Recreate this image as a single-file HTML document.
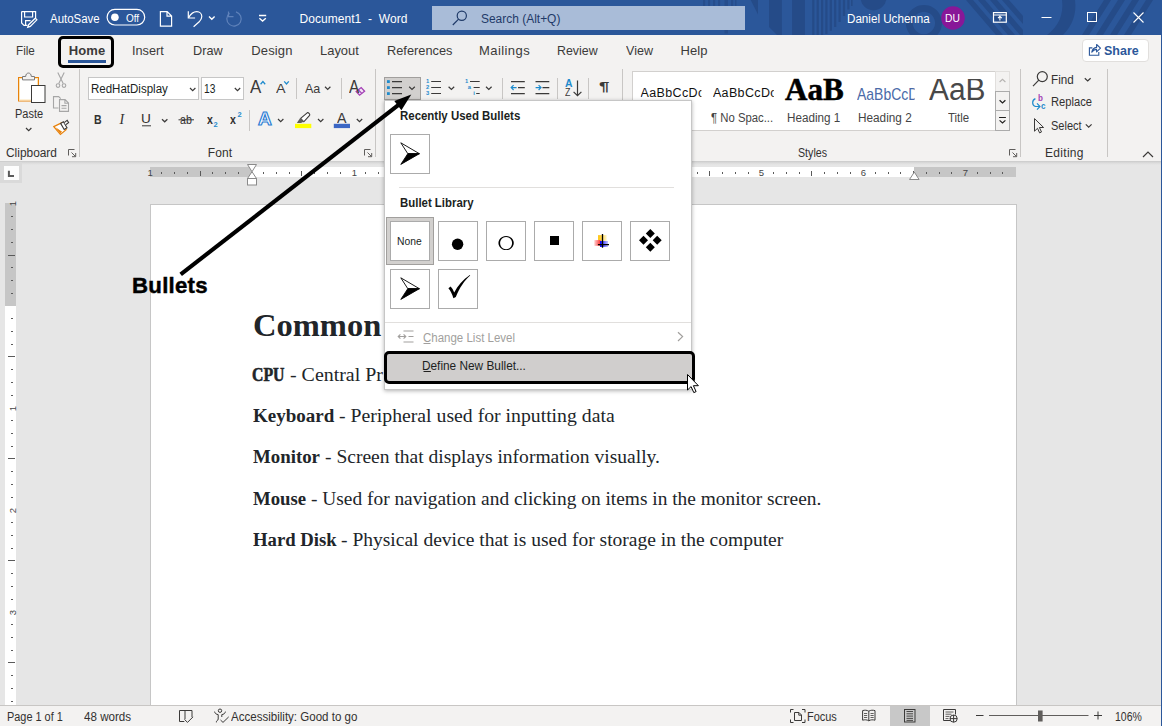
<!DOCTYPE html>
<html lang="en"><head><meta charset="utf-8"><title>Document1 - Word</title>
<style>
html,body{margin:0;padding:0}
body{width:1162px;height:726px;position:relative;overflow:hidden;background:#e6e6e6;font-family:"Liberation Sans",sans-serif}
.a{position:absolute}
.t{position:absolute;white-space:pre;z-index:4}
#title{left:0;top:0;width:1162px;height:35px;background:#2b579a}
#tabs{left:0;top:35px;width:1162px;height:33px;background:#f3f2f1}
#ribbon{left:0;top:68px;width:1162px;height:93px;background:#f3f2f1}
#rshadow{left:0;top:161px;width:1162px;height:4px;background:linear-gradient(#c9c9c9,#dcdcdc 50%,#e6e6e6)}
#page{left:150px;top:204px;width:865px;height:501px;background:#fff;border:1px solid #c6c6c6;border-bottom:none}
#status{left:0;top:705px;width:1162px;height:21px;background:#f3f2f1;border-top:1px solid #c8c6c4;box-sizing:border-box}
.vs{position:absolute;width:1px;background:#c8c6c4}
.box{position:absolute;background:#fff;border:1px solid #c6c6c6;box-sizing:border-box}
#dd{left:384px;top:100px;width:308px;height:290px;background:#fff;border:1px solid #c6c6c6;box-sizing:border-box;box-shadow:0 1px 4px rgba(0,0,0,.3);z-index:5}
.bb{position:absolute;width:40px;height:40px;box-sizing:border-box;border:1px solid #ababab;background:#fff;z-index:6}
svg{position:absolute;left:0;top:0;overflow:visible}

</style></head>
<body>
<div class="a" id="title"></div>
<div class="a" id="tabs"></div>
<div class="a" id="ribbon"></div>
<div class="a" id="rshadow"></div>
<div class="a" id="page"></div>
<div class="a" id="status"></div>
<!-- search box -->
<div class="a" style="left:432px;top:6px;width:313px;height:24px;background:#a9bcd8"></div>
<!-- share -->
<div class="a" style="left:1081.5px;top:38.5px;width:67px;height:23px;background:#fff;border:1px solid #e1dfdd;border-radius:4px;box-sizing:border-box"></div>
<!-- home underline -->
<div class="a" style="left:68px;top:60px;width:38px;height:3px;background:#2b579a"></div>
<!-- ribbon separators -->
<div class="vs" style="left:79px;top:69px;height:88px"></div>
<div class="vs" style="left:375px;top:69px;height:88px"></div>
<div class="vs" style="left:622px;top:69px;height:88px"></div>
<div class="vs" style="left:1020px;top:69px;height:88px"></div>
<div class="vs" style="left:1107px;top:69px;height:88px"></div>
<div class="vs" style="left:296px;top:78px;height:21px"></div>
<div class="vs" style="left:341px;top:78px;height:21px"></div>
<div class="vs" style="left:249px;top:110px;height:21px"></div>
<div class="vs" style="left:502px;top:78px;height:21px"></div>
<div class="vs" style="left:557px;top:78px;height:21px"></div>
<div class="vs" style="left:588px;top:78px;height:21px"></div>
<!-- font boxes -->
<div class="box" style="left:88px;top:77px;width:111px;height:23px"></div>
<div class="box" style="left:201px;top:77px;width:43px;height:23px"></div>
<!-- bullets button pressed -->
<div class="a" style="left:384px;top:77px;width:37px;height:23px;background:#d2d0ce;border:1px solid #a19f9d;box-sizing:border-box"></div>
<!-- styles gallery -->
<div class="box" style="left:632px;top:71px;width:364px;height:60px;border-color:#d2d0ce"></div>
<!-- rulers -->
<div class="a" style="left:150px;top:167px;width:866px;height:10px;background:#fff"></div>
<div class="a" style="left:150px;top:167px;width:102px;height:10px;background:#c6c6c6"></div>
<div class="a" style="left:914px;top:167px;width:102px;height:10px;background:#c6c6c6"></div>
<div class="a" style="left:5px;top:203px;width:11px;height:502px;background:#fff"></div>
<div class="a" style="left:5px;top:203px;width:11px;height:103px;background:#c6c6c6"></div>
<div class="a" style="left:0;top:162px;width:22px;height:21px;background:#dadada"></div>
<div class="a" style="left:3.5px;top:165.5px;width:15px;height:14.5px;background:#fdfdfd"></div>
<!-- status selected view -->
<div class="a" style="left:890px;top:706px;width:40px;height:20px;background:#c8c8c8"></div>
<svg width="1162" height="726" viewBox="0 0 1162 726" style="z-index:3" fill="none" stroke-linecap="butt">
<!-- title pattern -->
<g fill="#254b88" stroke="none">
  <clipPath id="tc"><rect x="700" y="0" width="462" height="35"/></clipPath>
  <g clip-path="url(#tc)">
    <path d="M703 0h2.200v6h-2.200zM708 0h2.200v6h-2.200zM713 0h2.200v6h-2.200zM718 0h2.200v6h-2.200zM724.500 0h3.500v6h-3.500zM731 0h2.200v6h-2.200zM735 0h1.500v6h-1.500zM724.500 30h3.500v3.500h-3.500z" opacity=".8"/>
    <path d="M750.700 0h7.300v14.600z"/>
    <path d="M769 0h12.900v35h-4.900l-8-8z"/>
    <rect x="792.100" y="0" width="12.800" height="35"/>
    <path d="M812.200 0h2.200v35h-2.200zM816.600 0h2.200v35h-2.200zM821 0h2.200v35h-2.200zM825.300 0h2.200v34h-2.200zM829.700 0h2.200v30.700h-2.200zM834.100 0h2.200v27h-2.200zM838.500 0h2.200v22h-2.200zM842.900 0h2.200v16h-2.200zM847.300 0h2.200v9.500h-2.200zM851 0h1.600v5.900h-1.600z"/>
    <circle cx="873.500" cy="-2.500" r="12.900"/>
    <path d="M923.900 5a18 18 0 1 0 .01 0zM923.900 11.800a11.200 11.200 0 1 1 -.01 0z" fill-rule="evenodd"/>
    <path d="M966 0h7l30 35h-7zM978 0h7l30 35h-7zM990 0h7l26 30v5h-3zM1002 0h7l14 16v8z"/>
    <path d="M1062 0h13c2 14-3 26-12 35h-16c11-8 17-20 15-35z"/>
    <path d="M1104 0h7l-22 35h-7zM1118 0h7l-22 35h-7zM1132 0h7l-22 35h-7zM1146 0h7l-22 35h-7z"/>
  </g>
</g>
<!-- ===== title bar ===== -->
<g stroke="#fff" stroke-width="1.2" fill="none">
  <!-- save -->
  <path d="M21.6 11.6h14v7M21.6 11.6v11.4l2.4 2.4h3.5M24.6 11.6v5.4h8v-5.4M25.6 25.4v-4.8h5"/>
  <path d="M35.3 18.2l1.6 1.6-6.6 6.6-2.6.9.9-2.6z"/>
  <!-- toggle -->
  <rect x="107.1" y="9.4" width="37.6" height="15.6" rx="7.8"/>
  <!-- new doc -->
  <path d="M160.4 11.6h6.8l4.4 4.4v10.2h-11.2zM167 11.8v4.4h4.4"/>
  <!-- undo -->
  <path d="M188.3 11.2v6.8h6.8" />
  <path d="M188.6 17.6c2-3.6 5-6 8.2-6 3 0 5 2.300 5 5 0 2-1 3.600-2.600 5.200l-5.600 4.900"/>
  <path d="M209 16.600l2.800 2.600 2.800-2.600" stroke-width="1.4"/>
  <!-- customize -->
  <path d="M259 15.500h7.200M259.400 18.200l3.200 2.800 3.200-2.800" stroke-width="1.4"/>
  <!-- ribbon display -->
  <rect x="993.500" y="12.600" width="12.800" height="9.600" />
  <path d="M993.500 15h12.800M999.900 20.600v-4M998 18.200l1.900-1.900 1.900 1.900" stroke-width="1.100"/>
  <!-- min/max/close -->
  <path d="M1041.500 17.500h10" stroke-width="1"/>
  <rect x="1087.500" y="12.500" width="9" height="9" stroke-width="1"/>
  <path d="M1133.500 12.500l10 10M1143.500 12.500l-10 10" stroke-width="1.100"/>
</g>
<circle cx="114.900" cy="17.200" r="3.800" fill="#fff"/>
<!-- redo dim -->
<g stroke="#5f82ba" stroke-width="1.200" fill="none">
  <path d="M229.500 13.200a7.200 7.200 0 1 0 6.500-1.300"/>
  <path d="M228.500 11.600v5h5"/>
</g>
<!-- search icon -->
<g stroke="#1f3a68" stroke-width="1.200" fill="none">
  <circle cx="461.800" cy="15.800" r="4.600"/>
  <path d="M458.600 19.200l-5.800 5.800"/>
</g>
<!-- DU -->
<circle cx="953" cy="18" r="11.800" fill="#881798" stroke="none"/>

<!-- ===== clipboard group ===== -->
<rect x="18.500" y="77.500" width="20" height="23.500" fill="#fff" stroke="#e8820c" stroke-width="1"/>
<rect x="19.500" y="78.500" width="18" height="21.500" fill="none" stroke="#fbe3b5" stroke-width="1"/>
<path d="M22.500 79.900v-3.400h3.200c0-4.600 5.600-4.600 5.600 0h3.200v3.400z" fill="#f3f2f1" stroke="#7a7a7a" stroke-width="1"/>
<rect x="31.500" y="85.500" width="13.500" height="17" fill="#fff" stroke="#3b3a39" stroke-width="1"/>
<path d="M26 128l2.700 2.600 2.700-2.600" stroke="#3b3a39" stroke-width="1.200"/>
<!-- scissors -->
<g stroke="#a6a6a6" stroke-width="1.100" fill="none">
  <path d="M57.800 72.600l5.400 11M64.200 72.600l-5.400 11"/>
  <circle cx="58" cy="85.600" r="1.800"/><circle cx="64" cy="85.600" r="1.800"/>
</g>
<!-- copy -->
<g stroke="#a6a6a6" stroke-width="1.100" fill="none">
  <path d="M58.500 108h-5v-11.400h5.200l2 2"/>
  <path d="M59.500 99.600h5.600l3.400 3.400v8.400h-9zM64.900 99.800v3.400h3.400"/>
  <path d="M61.500 105.600h5M61.500 108.200h5"/>
</g>
<!-- format painter -->
<g>
  <path d="M53.800 126.600l8.200-4 4.200 7-5.800 4.800z" fill="#fff" stroke="#e8820c" stroke-width="1.200"/>
  <path d="M55.500 127.200l4.600 6.200 2-1.600z" fill="#e8820c" stroke="none"/>
  <path d="M60.600 123.400l2.800-1.600 3.600 6-2.800 1.700z" fill="#fff" stroke="#3b3a39" stroke-width="1.100"/>
  <path d="M64.200 122.600l3-2.200 1.400 2.200-3 2.200" fill="#fff" stroke="#3b3a39" stroke-width="1.100"/>
</g>
<!-- launchers -->
<g stroke="#605e5c" stroke-width="1" fill="none">
  <path id="lch" d="M68.500 155.500v-6h6M71.500 152.500l4 4M75.700 153v3.700h-3.700"/>
  <use href="#lch" x="296" y="0"/>
  <use href="#lch" x="941" y="0"/>
</g>

<!-- ===== font group ===== -->
<g stroke="#3b3a39" stroke-width="1.200" fill="none">
  <path d="M190 88l2.700 2.600 2.700-2.600"/>
  <path d="M234.800 88l2.700 2.600 2.700-2.600"/>
  <path d="M162 119.200l2.700 2.600 2.700-2.600"/>
  <path d="M325 86.800l2.700 2.600 2.700-2.600"/>
  <path d="M278 119l2.700 2.600 2.700-2.600"/>
  <path d="M318 119l2.700 2.600 2.700-2.600"/>
  <path d="M356.800 119l2.700 2.600 2.700-2.600"/>
</g>
<path d="M142 125.800h9" stroke="#3b3a39" stroke-width="1"/>
<path d="M178.500 119.800h15.500" stroke="#3b3a39" stroke-width="1"/>
<!-- grow/shrink carets -->
<path d="M260.600 84.200l2.300-2.600 2.300 2.600" stroke="#1e8bcd" stroke-width="1.300"/>
<path d="M284.200 81.400l2.300 2.600 2.300-2.600" stroke="#1e8bcd" stroke-width="1.300"/>
<!-- clear formatting eraser -->
<path d="M356.200 91.600l5-4 3.400 3.600-5 4z" fill="#f3e6f5" stroke="#a33fb5" stroke-width="1.300"/>
<path d="M358.400 89.800l3.400 3.600" stroke="#a33fb5" stroke-width="1.200"/>
<!-- text effects A drawn with real text in html; highlight bar -->
<rect x="295" y="123.800" width="16.300" height="4.300" fill="#ffff00"/>
<path d="M300.600 118.400l6.600-5.600c1-.8 3.200 1.400 2.400 2.600l-5.800 6.400z" fill="#fff" stroke="#3b3a39" stroke-width="1.100"/>
<path d="M296.800 123l3.400-5 3.800 3.400-3 1.600z" fill="#605e5c"/>
<rect x="333.800" y="123.800" width="16.200" height="4.300" fill="#3b66c4"/>

<!-- ===== paragraph group ===== -->
<!-- bullets icon -->
<g fill="#1e8bcd">
  <rect x="387" y="80.200" width="2.800" height="2.800"/><rect x="387" y="86.200" width="2.800" height="2.800"/><rect x="387" y="92.200" width="2.800" height="2.800"/>
</g>
<g stroke="#3b3a39" stroke-width="1.100">
  <path d="M392 81.600h10M392 87.600h10M392 93.600h10"/>
  <path d="M409.200 86.800l2.800 2.700 2.800-2.700" stroke-width="1.200"/>
</g>
<!-- numbering -->
<g stroke="#3b3a39" stroke-width="1.100">
  <path d="M431.200 81.500h9.800M431.200 87.500h9.800M431.200 93.500h9.800"/>
  <path d="M448.600 86.800l2.800 2.700 2.800-2.700" stroke-width="1.200"/>
  <path d="M470 81.500h9.700M473.600 87.500h6.100M476.200 93.500h3.500"/>
  <path d="M486 86.800l2.800 2.700 2.800-2.700" stroke-width="1.200"/>
</g>
<!-- indent icons -->
<g stroke="#3b3a39" stroke-width="1.100">
  <path d="M511 81.600h13.800M518 87.600h6.800M511 93.600h13.800"/>
  <path d="M535.500 81.600h13.800M542.500 87.600h6.800M535.500 93.600h13.800"/>
</g>
<g stroke="#1e8bcd" stroke-width="1.200">
  <path d="M511.200 87.600h5.400M513.600 85.200l-2.400 2.400 2.400 2.400"/>
  <path d="M535.600 87.600h5.400M538.600 85.200l2.400 2.400-2.400 2.400"/>
</g>
<!-- sort arrow -->
<path d="M577.500 80.400v15M573.600 91.800l3.900 3.900 3.900-3.900" stroke="#3b3a39" stroke-width="1.200"/>

<!-- ===== styles gallery scroll ===== -->
<g fill="#f3f2f1" stroke-width="1">
  <rect x="995.500" y="71.500" width="14" height="20" stroke="#e1dfdd"/>
  <rect x="995.500" y="91.500" width="14" height="19" stroke="#ababab"/>
  <rect x="995.500" y="110.500" width="14" height="20" stroke="#ababab"/>
</g>
<path d="M999.600 82l2.900-2.700 2.900 2.700" stroke="#b5b3b1" stroke-width="1.100"/>
<path d="M999.600 100.300l2.900 2.700 2.900-2.700" stroke="#201f1e" stroke-width="1.200"/>
<path d="M999.100 117.500h6.800M999.600 120.400l2.900 2.600 2.900-2.600" stroke="#201f1e" stroke-width="1.200"/>

<!-- ===== editing ===== -->
<g stroke="#3b3a39" stroke-width="1.200" fill="none">
  <circle cx="1042.300" cy="76.600" r="5"/>
  <path d="M1038.800 80.200l-5.800 6"/>
  <path d="M1084.800 78.200l2.900 2.700 2.900-2.700"/>
  <path d="M1085.800 124.400l2.900 2.700 2.900-2.700"/>
  <path d="M1034.500 118.600v12.600l3-2.900 2.100 4.600 1.900-.9-2.100-4.500h4.200z" stroke-width="1" fill="#f3f2f1"/>
</g>
<path d="M1143 157l5-5 5 5" stroke="#3b3a39" stroke-width="1.200"/>
<!-- replace icon -->
<g stroke="#1e8bcd" stroke-width="1.200" fill="none">
  <path d="M1035.400 98.600c-3.600 1.600-3.800 6.600.2 7.900h4M1037 103.400l3 3.100-3 3.100"/>
</g>

<!-- share icon -->
<g stroke="#2b579a" stroke-width="1.100" fill="none">
  <path d="M1092.400 47.900h-3v7.400h9.400v-3.300"/>
  <path d="M1091.800 52.200c.6-3 2.400-4.600 4.800-4.800v-2.900l3.900 3.700-3.900 3.700v-2.500c-2 0-3.600.9-4.800 2.800z" stroke-linejoin="round"/>
</g>

<!-- ===== ruler marks ===== -->
<path d="M161.5 172v2M174.5 172v2M187.5 172v2M200.5 171v5M212.5 172v2M225.5 172v2M238.5 172v2M263.5 172v2M276.5 172v2M289.5 172v2M301.5 171v5M314.5 172v2M327.5 172v2M340.5 172v2M365.5 172v2M378.5 172v2M391.5 172v2M403.5 171v5M416.5 172v2M429.5 172v2M442.5 172v2M467.5 172v2M480.5 172v2M493.5 172v2M505.5 171v5M518.5 172v2M531.5 172v2M544.5 172v2M569.5 172v2M582.5 172v2M595.5 172v2M607.5 171v5M620.5 172v2M633.5 172v2M646.5 172v2M671.5 172v2M684.5 172v2M697.5 172v2M709.5 171v5M722.5 172v2M735.5 172v2M748.5 172v2M773.5 172v2M786.5 172v2M799.5 172v2M811.5 171v5M824.5 172v2M837.5 172v2M850.5 172v2M875.5 172v2M888.5 172v2M900.5 172v2M913.5 171v5M926.5 172v2M939.5 172v2M951.5 172v2M977.5 172v2M990.5 172v2M1002.5 172v2M11 216.5h2M11 229.5h2M11 242.5h2M8 255.5h7M11 267.5h2M11 280.5h2M11 293.5h2M11 318.5h2M11 331.5h2M11 344.5h2M8 356.5h7M11 369.5h2M11 382.5h2M11 395.5h2M11 420.5h2M11 433.5h2M11 446.5h2M8 458.5h7M11 471.5h2M11 484.5h2M11 497.5h2M11 522.5h2M11 535.5h2M11 548.5h2M8 560.5h7M11 573.5h2M11 586.5h2M11 599.5h2M11 624.5h2M11 637.5h2M11 650.5h2M8 662.5h7M11 675.5h2M11 688.5h2M11 701.5h2" stroke="#5a5a5a" stroke-width="1"/>

<!-- ===== status bar ===== -->
<g stroke="#3b3a39" stroke-width="1" fill="none">
  <!-- book -->
  <path d="M185 710.500h-5.500v11h4.800M185 710.500v8.600M185 710.500h7v6.600M184.400 719.300l3.100 3.100 5.500-5.500"/>
  <!-- accessibility -->
  <circle cx="220" cy="710.700" r="1.700"/>
  <path d="M214.600 711.600c.3 2 1.800 2.800 3.600 3v4.400c0 2-2.400 1.400-1.800 3.400M225.400 711.600c-.3 2-1.800 2.800-3.600 3v2.400"/>
  <path d="M220.500 720l2.500 2.400 5.700-5.500"/>
  <!-- focus -->
  <path d="M790.500 712.500v-3h3M802 709.500h3v3M805 719.500v3h-3M793.500 722.500h-3v-3"/>
  <path d="M794.500 712.500h4.500l2.500 2.500v5.500h-7zM798.800 712.700v2.500h2.500"/>
  <!-- read mode -->
  <path d="M868.800 711.200c-2-1.200-4-1.200-6.200-.6v9.600c2.200-.6 4.200-.6 6.200.6 2-1.200 4-1.200 6.200-.6v-9.600c-2.200-.6-4.200-.6-6.200.6zM868.800 711.200v9.600"/>
  <path d="M864 713.500h3.200M864 715.500h3.200M864 717.500h3.200M870.500 713.500h3.200M870.500 715.500h3.200M870.500 717.500h3.200" stroke-width=".8"/>
  <!-- web layout -->
  <path d="M950 720.500h-6.500v-11h12v5"/>
  <path d="M945.500 712h8M945.500 714.200h6M945.500 716.400h4M945.500 718.600h3" stroke-width=".8"/>
  <circle cx="953.600" cy="718.600" r="3.600"/><path d="M950 718.600h7.200M953.600 715v7.200"/>
  <!-- zoom -->
  <path d="M976 715.500h7.500M1094 715.500h8M1098 711.500v8"/>
  <path d="M989 715.500h99.500" stroke="#605e5c"/>
</g>
<rect x="1038" y="710.500" width="4.600" height="11" fill="#605e5c"/>

<!-- print layout icon -->
<g stroke="#3b3a39" stroke-width="1" fill="none">
  <rect x="904.500" y="709.500" width="10.500" height="12.500" fill="none"/>
  <path d="M906.500 711.500h6.500M906.500 713.800h6.500M906.500 716.100h6.500M906.500 718.400h6.500M906.500 720.400h6.500" stroke-width=".9"/>
</g>
<path d="M8.900 170.700v5.300h5.100" stroke="#5a5a5a" stroke-width="2" fill="none"/>
<!-- indent markers -->
<g stroke="#8a8a8a" stroke-width="1" fill="#fff">
  <path d="M247.500 164.500h9l-4.500 7.200z"/>
  <path d="M247.500 178.500l4.500-6.800 4.500 6.800z"/>
  <rect x="247.500" y="178.500" width="9" height="6.500"/>
  <path d="M909.500 179.500l4.800-7.400 4.800 7.400z"/>
</g>
</svg>

<span class="t" id="t0" style="left:50.30px;top:13.44px;font:normal 400 12px/1 'Liberation Sans', sans-serif;color:#fff;letter-spacing:0.000px;transform:scaleX(0.9558);transform-origin:0 0;">AutoSave</span>
<span class="t" id="t1" style="left:125.90px;top:14.14px;font:normal 400 10px/1 'Liberation Sans', sans-serif;color:#fff;letter-spacing:0.000px;">Off</span>
<span class="t" id="t2" style="left:299.50px;top:13.44px;font:normal 400 12px/1 'Liberation Sans', sans-serif;color:#fff;letter-spacing:0.047px;">Document1  -  Word</span>
<span class="t" id="t3" style="left:481.00px;top:13.44px;font:normal 400 12px/1 'Liberation Sans', sans-serif;color:#1f3a68;letter-spacing:0.000px;transform:scaleX(0.9962);transform-origin:0 0;">Search (Alt+Q)</span>
<span class="t" id="t4" style="left:846.60px;top:13.44px;font:normal 400 12px/1 'Liberation Sans', sans-serif;color:#fff;letter-spacing:0.000px;transform:scaleX(0.9694);transform-origin:0 0;">Daniel Uchenna</span>
<span class="t" id="t5" style="left:944.70px;top:12.69px;font:normal 400 11px/1 'Liberation Sans', sans-serif;color:#fff;letter-spacing:0.000px;transform:scaleX(0.9333);transform-origin:0 0;">DU</span>
<span class="t" id="t6" style="left:16.20px;top:44.00px;font:normal 400 13px/1 'Liberation Sans', sans-serif;color:#3b3a39;letter-spacing:0.000px;transform:scaleX(0.9000);transform-origin:0 0;">File</span>
<span class="t" id="t7" style="left:68.80px;top:44.00px;font:normal 700 13px/1 'Liberation Sans', sans-serif;color:#3b3a39;letter-spacing:0.067px;">Home</span>
<span class="t" id="t8" style="left:132.20px;top:44.00px;font:normal 400 13px/1 'Liberation Sans', sans-serif;color:#3b3a39;letter-spacing:0.000px;transform:scaleX(0.9781);transform-origin:0 0;">Insert</span>
<span class="t" id="t9" style="left:192.50px;top:44.00px;font:normal 400 13px/1 'Liberation Sans', sans-serif;color:#3b3a39;letter-spacing:0.000px;transform:scaleX(0.9767);transform-origin:0 0;">Draw</span>
<span class="t" id="t10" style="left:251.30px;top:44.00px;font:normal 400 13px/1 'Liberation Sans', sans-serif;color:#3b3a39;letter-spacing:0.140px;">Design</span>
<span class="t" id="t11" style="left:320.20px;top:44.00px;font:normal 400 13px/1 'Liberation Sans', sans-serif;color:#3b3a39;letter-spacing:0.000px;transform:scaleX(0.9947);transform-origin:0 0;">Layout</span>
<span class="t" id="t12" style="left:387.00px;top:44.00px;font:normal 400 13px/1 'Liberation Sans', sans-serif;color:#3b3a39;letter-spacing:0.000px;transform:scaleX(0.9846);transform-origin:0 0;">References</span>
<span class="t" id="t13" style="left:479.00px;top:44.00px;font:normal 400 13px/1 'Liberation Sans', sans-serif;color:#3b3a39;letter-spacing:0.429px;">Mailings</span>
<span class="t" id="t14" style="left:557.00px;top:44.00px;font:normal 400 13px/1 'Liberation Sans', sans-serif;color:#3b3a39;letter-spacing:0.000px;transform:scaleX(0.9524);transform-origin:0 0;">Review</span>
<span class="t" id="t15" style="left:626.00px;top:44.00px;font:normal 400 13px/1 'Liberation Sans', sans-serif;color:#3b3a39;letter-spacing:0.000px;transform:scaleX(0.9643);transform-origin:0 0;">View</span>
<span class="t" id="t16" style="left:680.40px;top:44.00px;font:normal 400 13px/1 'Liberation Sans', sans-serif;color:#3b3a39;letter-spacing:0.100px;">Help</span>
<span class="t" id="t17" style="left:1104.20px;top:44.10px;font:normal 700 13px/1 'Liberation Sans', sans-serif;color:#2b579a;letter-spacing:0.000px;transform:scaleX(0.9600);transform-origin:0 0;">Share</span>
<span class="t" id="t18" style="left:14.50px;top:107.54px;font:normal 400 12px/1 'Liberation Sans', sans-serif;color:#323130;letter-spacing:0.000px;transform:scaleX(0.9167);transform-origin:0 0;">Paste</span>
<span class="t" id="t19" style="left:5.50px;top:146.84px;font:normal 400 12px/1 'Liberation Sans', sans-serif;color:#323130;letter-spacing:0.000px;transform:scaleX(0.9920);transform-origin:0 0;">Clipboard</span>
<span class="t" id="t20" style="left:207.80px;top:146.84px;font:normal 400 12px/1 'Liberation Sans', sans-serif;color:#323130;letter-spacing:0.067px;">Font</span>
<span class="t" id="t21" style="left:798.00px;top:146.84px;font:normal 400 12px/1 'Liberation Sans', sans-serif;color:#323130;letter-spacing:0.000px;transform:scaleX(0.8875);transform-origin:0 0;">Styles</span>
<span class="t" id="t22" style="left:1045.00px;top:146.84px;font:normal 400 12px/1 'Liberation Sans', sans-serif;color:#323130;letter-spacing:0.300px;">Editing</span>
<span class="t" id="t23" style="left:90.70px;top:82.64px;font:normal 400 12px/1 'Liberation Sans', sans-serif;color:#201f1e;letter-spacing:0.000px;transform:scaleX(0.9595);transform-origin:0 0;">RedHatDisplay</span>
<span class="t" id="t24" style="left:203.60px;top:82.64px;font:normal 400 12px/1 'Liberation Sans', sans-serif;color:#201f1e;letter-spacing:0.000px;transform:scaleX(0.8538);transform-origin:0 0;">13</span>
<span class="t" id="t25" style="left:94.40px;top:112.50px;font:normal 700 13px/1 'Liberation Sans', sans-serif;color:#323130;letter-spacing:0.000px;transform:scaleX(0.8111);transform-origin:0 0;">B</span>
<span class="t" id="t26" style="left:119.50px;top:112.78px;font:italic 400 14px/1 'Liberation Serif', serif;color:#323130;letter-spacing:0.000px;transform:scaleX(1.0000);transform-origin:0 0;">I</span>
<span class="t" id="t27" style="left:141.30px;top:112.30px;font:normal 400 13px/1 'Liberation Sans', sans-serif;color:#323130;letter-spacing:0.000px;transform:scaleX(1.0500);transform-origin:0 0;">U</span>
<span class="t" id="t28" style="left:179.50px;top:114.34px;font:normal 400 12px/1 'Liberation Sans', sans-serif;color:#323130;letter-spacing:0.000px;transform:scaleX(0.8846);transform-origin:0 0;">ab</span>
<span class="t" id="t29" style="left:206.70px;top:112.50px;font:normal 700 13px/1 'Liberation Sans', sans-serif;color:#323130;letter-spacing:0.000px;transform:scaleX(0.8125);transform-origin:0 0;">x</span>
<span class="t" id="t30" style="left:213.60px;top:121.45px;font:normal 700 7.5px/1 'Liberation Sans', sans-serif;color:#1e8bcd;letter-spacing:0.000px;">2</span>
<span class="t" id="t31" style="left:229.50px;top:112.50px;font:normal 700 13px/1 'Liberation Sans', sans-serif;color:#323130;letter-spacing:0.000px;transform:scaleX(0.8125);transform-origin:0 0;">x</span>
<span class="t" id="t32" style="left:237.60px;top:110.85px;font:normal 700 7.5px/1 'Liberation Sans', sans-serif;color:#1e8bcd;letter-spacing:0.000px;">2</span>
<span class="t" id="t33" style="left:250.00px;top:78.22px;font:normal 400 18.4px/1 'Liberation Sans', sans-serif;color:#3b3a39;letter-spacing:0.000px;transform:scaleX(0.9167);transform-origin:0 0;">A</span>
<span class="t" id="t34" style="left:275.70px;top:81.80px;font:normal 400 13px/1 'Liberation Sans', sans-serif;color:#3b3a39;letter-spacing:0.000px;transform:scaleX(1.1000);transform-origin:0 0;">A</span>
<span class="t" id="t35" style="left:304.60px;top:81.80px;font:normal 400 13px/1 'Liberation Sans', sans-serif;color:#3b3a39;letter-spacing:0.000px;transform:scaleX(0.9625);transform-origin:0 0;">Aa</span>
<span class="t" id="t36" style="left:349.40px;top:78.22px;font:normal 400 18.4px/1 'Liberation Sans', sans-serif;color:#3b3a39;letter-spacing:0.000px;transform:scaleX(0.8333);transform-origin:0 0;">A</span>
<span class="t" id="t37" style="left:337.30px;top:110.53px;font:normal 400 14.5px/1 'Liberation Sans', sans-serif;color:#3b3a39;letter-spacing:0.000px;transform:scaleX(0.9800);transform-origin:0 0;">A</span>
<span class="t" id="t38" style="left:640.60px;top:87.02px;font:normal 400 12.5px/1 'Liberation Sans', sans-serif;color:#111;letter-spacing:0.357px;clip-path:inset(0 3.2px 0 0);">AaBbCcDc</span>
<span class="t" id="t39" style="left:712.90px;top:87.02px;font:normal 400 12.5px/1 'Liberation Sans', sans-serif;color:#111;letter-spacing:0.357px;clip-path:inset(0 3.2px 0 0);">AaBbCcDc</span>
<span class="t" id="t40" style="left:711.00px;top:111.54px;font:normal 400 12px/1 'Liberation Sans', sans-serif;color:#444;letter-spacing:0.000px;transform:scaleX(0.9446);transform-origin:0 0;">¶ No Spac...</span>
<span class="t" id="t41" style="left:785.10px;top:75.46px;font:normal 700 30.5px/1 'Liberation Serif', serif;color:#000;letter-spacing:0.000px;-webkit-text-stroke:.5px #000;transform:scaleX(1.0193);transform-origin:0 0;">AaB</span>
<span class="t" id="t42" style="left:786.90px;top:111.54px;font:normal 400 12px/1 'Liberation Sans', sans-serif;color:#444;letter-spacing:0.000px;transform:scaleX(0.9736);transform-origin:0 0;">Heading 1</span>
<span class="t" id="t43" style="left:856.70px;top:86.41px;font:normal 400 17px/1 'Liberation Sans', sans-serif;color:#4a6aa8;letter-spacing:0.000px;clip-path:inset(0 4.5px 0 0);transform:scaleX(0.8224);transform-origin:0 0;">AaBbCcD</span>
<span class="t" id="t44" style="left:858.40px;top:111.54px;font:normal 400 12px/1 'Liberation Sans', sans-serif;color:#444;letter-spacing:0.000px;transform:scaleX(0.9815);transform-origin:0 0;">Heading 2</span>
<span class="t" id="t45" style="left:929.00px;top:73.96px;font:normal 400 31px/1 'Liberation Sans', sans-serif;color:#484848;letter-spacing:0.000px;clip-path:inset(5px 0 0 0);transform:scaleX(0.9649);transform-origin:0 0;">AaB</span>
<span class="t" id="t46" style="left:948.00px;top:111.54px;font:normal 400 12px/1 'Liberation Sans', sans-serif;color:#444;letter-spacing:0.000px;transform:scaleX(0.9545);transform-origin:0 0;">Title</span>
<span class="t" id="t47" style="left:1051.00px;top:73.64px;font:normal 400 12px/1 'Liberation Sans', sans-serif;color:#323130;letter-spacing:0.000px;transform:scaleX(0.9727);transform-origin:0 0;">Find</span>
<span class="t" id="t48" style="left:1051.00px;top:96.24px;font:normal 400 12px/1 'Liberation Sans', sans-serif;color:#323130;letter-spacing:0.000px;transform:scaleX(0.9302);transform-origin:0 0;">Replace</span>
<span class="t" id="t49" style="left:1050.50px;top:119.54px;font:normal 400 12px/1 'Liberation Sans', sans-serif;color:#323130;letter-spacing:0.000px;transform:scaleX(0.9182);transform-origin:0 0;">Select</span>
<span class="t" id="t50" style="left:6.60px;top:710.54px;font:normal 400 12px/1 'Liberation Sans', sans-serif;color:#323130;letter-spacing:0.000px;transform:scaleX(0.9082);transform-origin:0 0;">Page 1 of 1</span>
<span class="t" id="t51" style="left:83.60px;top:710.54px;font:normal 400 12px/1 'Liberation Sans', sans-serif;color:#323130;letter-spacing:0.000px;transform:scaleX(0.9667);transform-origin:0 0;">48 words</span>
<span class="t" id="t52" style="left:231.30px;top:710.54px;font:normal 400 12px/1 'Liberation Sans', sans-serif;color:#323130;letter-spacing:0.000px;transform:scaleX(0.9618);transform-origin:0 0;">Accessibility: Good to go</span>
<span class="t" id="t53" style="left:806.50px;top:710.54px;font:normal 400 12px/1 'Liberation Sans', sans-serif;color:#323130;letter-spacing:0.000px;transform:scaleX(0.9125);transform-origin:0 0;">Focus</span>
<span class="t" id="t54" style="left:1114.50px;top:710.54px;font:normal 400 12px/1 'Liberation Sans', sans-serif;color:#323130;letter-spacing:0.000px;transform:scaleX(0.8733);transform-origin:0 0;">106%</span>
<span class="t" id="t55" style="left:252.60px;top:310.04px;font:normal 700 31px/1 'Liberation Serif', serif;color:#212529;letter-spacing:0.000px;transform:scaleX(1.0488);transform-origin:0 0;">Common</span>
<span class="t" id="t56" style="left:251.80px;top:365.93px;font:normal 700 18px/1 'Liberation Serif', serif;color:#212529;letter-spacing:0.000px;-webkit-text-stroke:.55px #212529;transform:scaleX(0.8778);transform-origin:0 0;">CPU</span>
<span class="t" id="t57" style="left:290.10px;top:365.59px;font:normal 400 18.4px/1 'Liberation Serif', serif;color:#212529;letter-spacing:0.000px;transform:scaleX(1.0824);transform-origin:0 0;">- Central Pr</span>
<span class="t hc" id="t58" style="left:383.60px;top:365.59px;font:normal 400 18.4px/1 'Liberation Serif', serif;color:#212529;letter-spacing:0.000px;transform:scaleX(1.075);transform-origin:0 0;">ocessing Unit</span>
<span class="t" id="t59" style="left:252.90px;top:406.59px;font:normal 700 18.4px/1 'Liberation Serif', serif;color:#212529;letter-spacing:0.000px;transform:scaleX(1.0333);transform-origin:0 0;">Keyboard</span>
<span class="t" id="t60" style="left:339.20px;top:406.59px;font:normal 400 18.4px/1 'Liberation Serif', serif;color:#212529;letter-spacing:0.000px;transform:scaleX(1.0730);transform-origin:0 0;">- Peripheral used for inputting data</span>
<span class="t" id="t61" style="left:252.90px;top:447.59px;font:normal 700 18.4px/1 'Liberation Serif', serif;color:#212529;letter-spacing:0.000px;transform:scaleX(1.0246);transform-origin:0 0;">Monitor</span>
<span class="t" id="t62" style="left:325.00px;top:447.59px;font:normal 400 18.4px/1 'Liberation Serif', serif;color:#212529;letter-spacing:0.000px;transform:scaleX(1.0617);transform-origin:0 0;">- Screen that displays information visually.</span>
<span class="t" id="t63" style="left:252.90px;top:489.59px;font:normal 700 18.4px/1 'Liberation Serif', serif;color:#212529;letter-spacing:0.000px;transform:scaleX(1.0192);transform-origin:0 0;">Mouse</span>
<span class="t" id="t64" style="left:310.80px;top:489.59px;font:normal 400 18.4px/1 'Liberation Serif', serif;color:#212529;letter-spacing:0.000px;transform:scaleX(1.0540);transform-origin:0 0;">- Used for navigation and clicking on items in the monitor screen.</span>
<span class="t" id="t65" style="left:252.90px;top:530.59px;font:normal 700 18.4px/1 'Liberation Serif', serif;color:#212529;letter-spacing:0.000px;transform:scaleX(1.0171);transform-origin:0 0;">Hard Disk</span>
<span class="t" id="t66" style="left:341.00px;top:530.59px;font:normal 400 18.4px/1 'Liberation Serif', serif;color:#212529;letter-spacing:0.000px;transform:scaleX(1.0613);transform-origin:0 0;">- Physical device that is used for storage in the computer</span>
<span class="t" id="t67" style="left:399.80px;top:109.54px;font:normal 700 12px/1 'Liberation Sans', sans-serif;color:#201f1e;letter-spacing:0.000px;z-index:8;transform:scaleX(0.9540);transform-origin:0 0;">Recently Used Bullets</span>
<span class="t" id="t68" style="left:399.80px;top:196.84px;font:normal 700 12px/1 'Liberation Sans', sans-serif;color:#201f1e;letter-spacing:0.000px;z-index:8;transform:scaleX(0.9506);transform-origin:0 0;">Bullet Library</span>
<span class="t" id="t69" style="left:396.60px;top:235.69px;font:normal 400 11px/1 'Liberation Sans', sans-serif;color:#201f1e;letter-spacing:0.000px;z-index:8;transform:scaleX(0.9385);transform-origin:0 0;">None</span>
<span class="t" id="t70" style="left:423.30px;top:332.44px;font:normal 400 12px/1 'Liberation Sans', sans-serif;color:#a19f9d;letter-spacing:0.000px;z-index:8;transform:scaleX(0.9579);transform-origin:0 0;">Change List Level</span>
<span class="t" id="t71" style="left:422.30px;top:359.84px;font:normal 400 12px/1 'Liberation Sans', sans-serif;color:#201f1e;letter-spacing:0.000px;z-index:8;transform:scaleX(0.9856);transform-origin:0 0;">Define New Bullet...</span>
<span class="t" id="t72" style="left:132.10px;top:274.81px;font:normal 700 22.2px/1 'Liberation Sans', sans-serif;color:#000;letter-spacing:0.250px;z-index:12;-webkit-text-stroke:.45px #000;">Bullets</span>
<span class="t" id="t73" style="left:147.50px;top:167.86px;font:normal 400 9.5px/1 'Liberation Sans', sans-serif;color:#444;letter-spacing:0.000px;">1</span>
<span class="t" id="t74" style="left:351.76px;top:167.86px;font:normal 400 9.5px/1 'Liberation Sans', sans-serif;color:#444;letter-spacing:0.000px;">1</span>
<span class="t" id="t75" style="left:452.90px;top:167.86px;font:normal 400 9.5px/1 'Liberation Sans', sans-serif;color:#444;letter-spacing:0.000px;">2</span>
<span class="t" id="t76" style="left:554.90px;top:167.86px;font:normal 400 9.5px/1 'Liberation Sans', sans-serif;color:#444;letter-spacing:0.000px;">3</span>
<span class="t" id="t77" style="left:656.80px;top:167.86px;font:normal 400 9.5px/1 'Liberation Sans', sans-serif;color:#444;letter-spacing:0.000px;">4</span>
<span class="t" id="t78" style="left:758.80px;top:167.86px;font:normal 400 9.5px/1 'Liberation Sans', sans-serif;color:#444;letter-spacing:0.000px;">5</span>
<span class="t" id="t79" style="left:860.80px;top:167.86px;font:normal 400 9.5px/1 'Liberation Sans', sans-serif;color:#444;letter-spacing:0.000px;">6</span>
<span class="t" id="t80" style="left:962.70px;top:167.86px;font:normal 400 9.5px/1 'Liberation Sans', sans-serif;color:#444;letter-spacing:0.000px;">7</span>
<span class="t" id="t81" style="left:9.60px;top:199.36px;font:normal 400 9.5px/1 'Liberation Sans', sans-serif;color:#444;letter-spacing:0.000px;transform:rotate(-90deg);transform-origin:2.6px 4.6px;">1</span>
<span class="t" id="t82" style="left:9.60px;top:403.96px;font:normal 400 9.5px/1 'Liberation Sans', sans-serif;color:#444;letter-spacing:0.000px;transform:rotate(-90deg);transform-origin:2.6px 4.6px;">1</span>
<span class="t" id="t83" style="left:9.60px;top:505.86px;font:normal 400 9.5px/1 'Liberation Sans', sans-serif;color:#444;letter-spacing:0.000px;transform:rotate(-90deg);transform-origin:2.6px 4.6px;">2</span>
<span class="t" id="t84" style="left:9.60px;top:607.86px;font:normal 400 9.5px/1 'Liberation Sans', sans-serif;color:#444;letter-spacing:0.000px;transform:rotate(-90deg);transform-origin:2.6px 4.6px;">3</span>
<span class="t" id="t85" style="left:258.00px;top:110.34px;font:normal 700 18.5px/1 'Liberation Sans', sans-serif;color:#fff;letter-spacing:0.000px;-webkit-text-stroke:1.15px #2b7cd3;transform:scaleX(1.0318);transform-origin:0 0;">A</span>
<span class="t" id="t86" style="left:565.00px;top:78.63px;font:normal 700 10px/1 'Liberation Sans', sans-serif;color:#1e8bcd;letter-spacing:0.000px;transform:scaleX(1.0429);transform-origin:0 0;">A</span>
<span class="t" id="t87" style="left:565.40px;top:88.33px;font:normal 400 10px/1 'Liberation Sans', sans-serif;color:#3b3a39;letter-spacing:0.000px;transform:scaleX(0.8857);transform-origin:0 0;">Z</span>
<span class="t" id="t88" style="left:598.60px;top:81.12px;font:normal 700 12.5px/1 'Liberation Sans', sans-serif;color:#3b3a39;letter-spacing:0.000px;transform:scaleX(1.4957);transform-origin:0 0;">¶</span>
<span class="t" id="t89" style="left:426.00px;top:79.49px;font:normal 700 5.8px/1 'Liberation Sans', sans-serif;color:#1e8bcd;letter-spacing:0.000px;">1</span>
<span class="t" id="t90" style="left:426.00px;top:84.99px;font:normal 700 5.8px/1 'Liberation Sans', sans-serif;color:#1e8bcd;letter-spacing:0.000px;">2</span>
<span class="t" id="t91" style="left:426.00px;top:90.89px;font:normal 700 5.8px/1 'Liberation Sans', sans-serif;color:#1e8bcd;letter-spacing:0.000px;">3</span>
<span class="t" id="t92" style="left:465.00px;top:79.49px;font:normal 700 5.8px/1 'Liberation Sans', sans-serif;color:#1e8bcd;letter-spacing:0.000px;">1</span>
<span class="t" id="t93" style="left:467.80px;top:84.89px;font:normal 700 5.8px/1 'Liberation Sans', sans-serif;color:#1e8bcd;letter-spacing:0.000px;">a</span>
<span class="t" id="t94" style="left:473.20px;top:90.89px;font:normal 700 5.8px/1 'Liberation Sans', sans-serif;color:#1e8bcd;letter-spacing:0.000px;">i</span>
<span class="t" id="t95" style="left:1037.60px;top:93.16px;font:normal 700 9.5px/1 'Liberation Sans', sans-serif;color:#a33fb5;letter-spacing:0.000px;transform:scaleX(.85);transform-origin:0 0;">b</span>
<span class="t" id="t96" style="left:1041.40px;top:101.36px;font:normal 700 9.5px/1 'Liberation Sans', sans-serif;color:#1e8bcd;letter-spacing:0.000px;transform:scaleX(.85);transform-origin:0 0;">c</span>
<!-- dropdown -->
<div class="a" id="dd"></div>
<div class="bb" style="left:390px;top:134px"></div>
<div class="a" style="left:399px;top:187px;width:275px;height:1px;background:#e1dfdd;z-index:6"></div>
<div class="a" style="left:386px;top:217px;width:48px;height:48px;background:#d2d0ce;border:1px solid #a19f9d;box-sizing:border-box;z-index:6"></div>
<div class="bb" style="left:390px;top:221px"></div>
<div class="bb" style="left:438px;top:221px"></div>
<div class="bb" style="left:486px;top:221px"></div>
<div class="bb" style="left:534px;top:221px"></div>
<div class="bb" style="left:582px;top:221px"></div>
<div class="bb" style="left:630px;top:221px"></div>
<div class="bb" style="left:390px;top:269px"></div>
<div class="bb" style="left:438px;top:269px"></div>
<div class="a" style="left:385px;top:322px;width:306px;height:1px;background:#e1dfdd;z-index:6"></div>
<!-- define new bullet -->
<div class="a" style="left:383.5px;top:351px;width:311.5px;height:32.5px;background:#d0cecd;border:3.3px solid #000;border-radius:5px;box-sizing:border-box;z-index:6"></div>
<svg width="1162" height="726" viewBox="0 0 1162 726" style="z-index:7" fill="none">
<!-- recently used arrow -->
<g id="arw">
  <path d="M400.800 142.800l18.600 10.900-11.600 0z" fill="#fff" stroke="#000" stroke-width=".9" stroke-linejoin="miter"/>
  <path d="M419.400 153.700l-18.600 10.700 7-10.700z" fill="#000" stroke="#000" stroke-width=".9"/>
</g>
<use href="#arw" x="0" y="135"/>
<!-- disc -->
<circle cx="457.600" cy="244.300" r="5.700" fill="#000"/>
<!-- circle -->
<path d="M506.100 236.100a7.700 7 0 1 0 .01 0zM506.100 236.900a6 6.200 0 1 1 -.01 0z" fill="#000" fill-rule="evenodd"/>
<!-- square -->
<rect x="550" y="236" width="9" height="9" fill="#000"/>
<!-- color cross -->
<defs>
<linearGradient id="gy"><stop offset="0" stop-color="#ffc000"/><stop offset="1" stop-color="#fff6cc"/></linearGradient>
<linearGradient id="gr"><stop offset="0" stop-color="#ffd0d0"/><stop offset="1" stop-color="#ff3030"/></linearGradient>
<linearGradient id="gb"><stop offset="0" stop-color="#0000ff"/><stop offset="1" stop-color="#c8c8ff"/></linearGradient>
</defs>
<rect x="598.100" y="235.100" width="8.600" height="5.800" fill="url(#gy)"/>
<rect x="594.300" y="240.100" width="6.200" height="5.700" fill="url(#gr)"/>
<rect x="600" y="241" width="8" height="6" fill="url(#gb)"/>
<path d="M602.500 234.100v13.700M597.900 244.600h11.100" stroke="#000" stroke-width="1.300"/>
<!-- diamonds -->
<g fill="#000">
  <path d="M650.300 229.100l4.500 4.500-4.500 4.500-4.500-4.500z"/>
  <path d="M650.300 242.800l4.500 4.500-4.500 4.500-4.500-4.500z"/>
  <path d="M643.500 235.800l4.500 4.500-4.500 4.500-4.500-4.500z"/>
  <path d="M657.200 235.800l4.500 4.500-4.500 4.500-4.500-4.500z"/>
</g>
<!-- check -->
<path d="M448.400 288.200l2.200-1.600c1.400 1.400 2.600 3.400 3.600 6 3.600-7 8.600-13 15.600-17.600l.4.600c-6 5.200-10.400 12-14.400 21.400l-2.400 1.200c-1.200-4-2.800-7.400-5-10z" fill="#000"/>
<!-- change list level icon -->
<g stroke="#a19f9d" stroke-width="1.100">
  <path d="M403.500 331h10M408.500 336.500h5M403.500 342h10M398.200 336.500h7.600M400.400 334.300l-2.200 2.200 2.200 2.200M403.600 334.300l2.200 2.200-2.200 2.200"/>
  <path d="M678 332.200l4.600 4.400-4.600 4.400" stroke-width="1.200"/>
</g>
<path d="M423.500 343.500h7" stroke="#a19f9d" stroke-width="1"/>
</svg>

<div class="a" style="left:1161px;top:35px;width:1px;height:691px;background:#2b579a;z-index:4"></div>
<!-- home annotation box -->
<div class="a" style="left:58px;top:36.4px;width:55.8px;height:31.8px;border:3px solid #000;border-radius:5px;box-sizing:border-box;z-index:12"></div>
<svg width="1162" height="726" viewBox="0 0 1162 726" style="z-index:11">
<line x1="180.700" y1="274.400" x2="399.500" y2="104.200" stroke="#000" stroke-width="4.100"/>
<polygon points="411.300,94.400 401.400,110.200 394.300,100.900" fill="#000"/>
<path d="M423.500 371.500h7.400" stroke="#201f1e" stroke-width="1"/>
<path d="M687.500 374.500v15.500l3.600-3.400 2.700 6 2.300-1-2.700-5.900h5z" fill="#fff" stroke="#000" stroke-width="1"/>
</svg>


</body></html>
